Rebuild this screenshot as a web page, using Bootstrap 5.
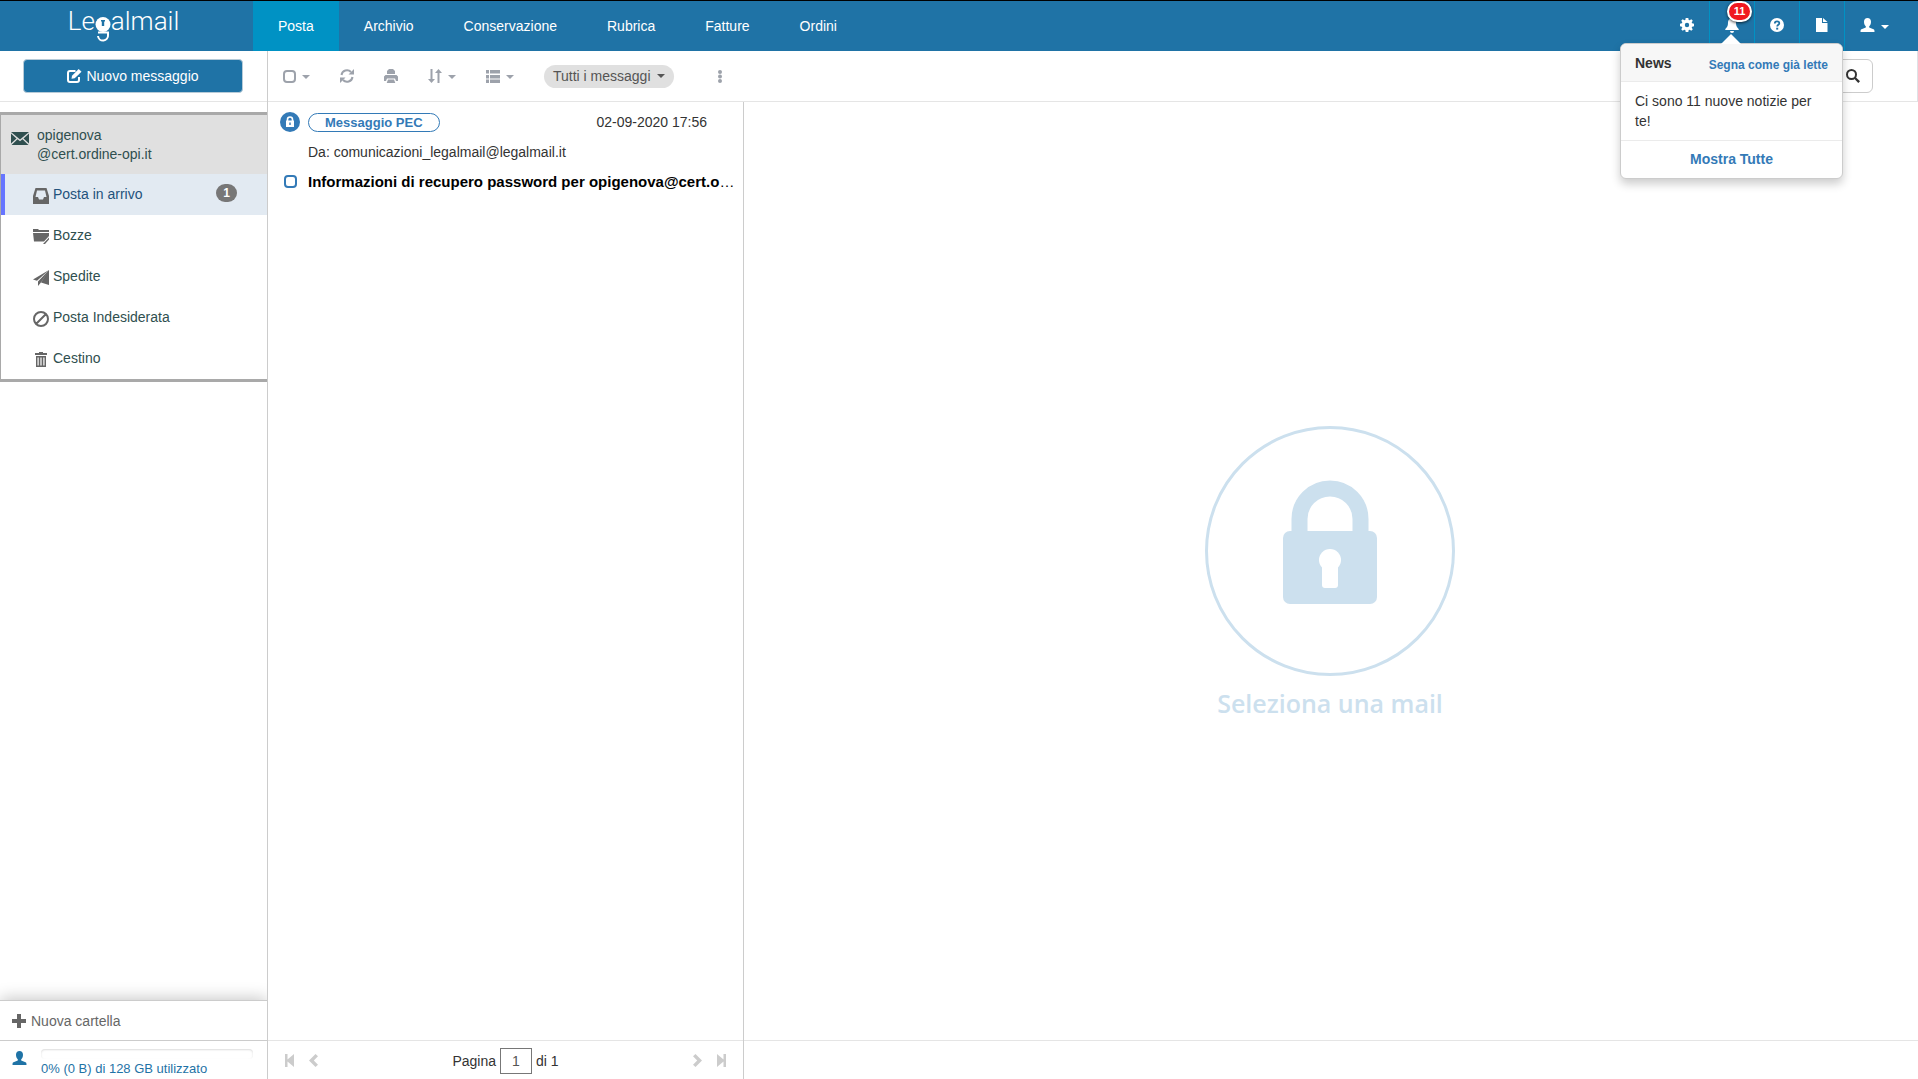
<!DOCTYPE html>
<html lang="it">
<head>
<meta charset="utf-8">
<meta name="viewport" content="width=device-width, initial-scale=1">
<title>Legalmail</title>
<link href="https://cdn.jsdelivr.net/npm/bootstrap@5.3.0/dist/css/bootstrap.min.css" rel="stylesheet">
<style>
body{font-family:"Liberation Sans",Arial,sans-serif;font-size:14px;line-height:20px;color:#333;background:#fff}
a{text-decoration:none}
svg{display:block;flex:none;fill:currentColor}
.topbar{background:#1f73a6;border-top:1px solid #000;height:51px}
.brand{width:253px;height:50px;padding-right:6px;color:#fff;font:300 26px/40px Roboto,"Liberation Sans",sans-serif}
.topbar .nav-link{color:#fff;padding:0 25px;line-height:50px;height:50px}
.topbar .nav-link.active{background:#0092c4}
.tool-link{width:45px;height:50px;color:#fff;border-left:1px solid #0092c4;padding-bottom:2px}
.tool-link.first{border-left-color:transparent}
.tool-link.user{width:74px;gap:6px;padding-left:15px}
.caret{width:0;height:0;border:4px solid transparent;border-top-color:currentColor;border-bottom:0}
.count-badge{position:absolute;top:0;right:2px;width:25px;height:21px;border:2px solid #fff;border-radius:11px;background:#f01820;font-size:11px;font-weight:700;line-height:17px;text-align:center;color:#fff;box-shadow:0 1px 3px rgba(0,0,0,.7)}
.bar{height:51px;border-bottom:1px solid #e5e5e5;flex:none}
.side{width:268px;border-right:1px solid #ccc}
.compose{height:34px;background:#1f73a6;color:#fff;border:1px solid #b7cbd8;border-radius:4px;gap:4px;margin:0 24px 0 23px;font-size:14px;line-height:20px}
.account{margin-top:10px;border:solid #a9a9a9;border-width:3px 0 3px 1px}
.account-head{background:#e0e0e0;color:#2f4f4f;line-height:19px;padding:11px 10px 10px;gap:8px}
.account-head svg{margin-top:6px}
.folder{height:41px;color:#2f4f4f;padding:0 30px 1px 32px;gap:4px}
.folder svg{color:#666;margin-top:3px}
.folder.current{background:#e2eaf2;color:#23527c;border-left:4px solid #6675ff;padding-left:28px}
.unread{background:#777;color:#fff;font-size:12px;font-weight:700;line-height:18px;width:21px;border-radius:9px;text-align:center;margin-bottom:2px}
.new-folder{height:40px;color:#666;border-top:1px solid #ccc;box-shadow:0 -2px 16px rgba(0,0,0,.22);clip-path:inset(-20px 0 0 0);padding:0 12px;gap:5px}
.quota{height:39px;border-top:1px solid #ccc;color:#1f73a6;padding:8px 14px 0 12px;gap:14px;font-size:13px;line-height:20px}
.quota svg{margin-top:2px}
.quota .progress{height:10px;background:#fff;border-radius:4px;box-shadow:inset 0 1px 2px rgba(0,0,0,.14)}
.box-check{appearance:none;width:13px;height:13px;border:2px solid #9da2ab;border-radius:4px;background:#fff;margin:0;display:block;flex:none}
.box-check.blue{border-color:#337ab7;margin-top:3px}
.icon-btn{background:none;border:0;padding:0;color:#9da2ab;gap:6px;display:flex;align-items:center;flex:none}
.icon-btn .caret{margin-top:2px}
.listbar{width:475px;padding:0 15px;gap:30px}
.filter{height:23px;background:#e0e0e0;color:#555;border:0;border-radius:12px;padding:0 9px;gap:6px;margin-right:14px}
.search{width:240px;margin-right:44px}
.search .form-control,.search .btn{height:34px;border-color:#ccc;font-size:14px}
.search .btn{width:38px;padding:0 10px;color:#333}
.list{width:476px;border-right:1px solid #ccc}
.msg{padding:10px 12px 0 12px;display:grid;grid-template-columns:20px minmax(0,1fr);gap:10px 8px}
.pec{border:1px solid #337ab7;border-radius:10px;color:#337ab7;font-size:13px;font-weight:700;line-height:17px;padding:0 16px}
.subject{color:#000;font-size:15px}
.pager{height:39px;border-top:1px solid #e5e5e5;padding:1px 17px 0;color:#333}
.pager .icon-btn{color:#ccc}
.pager-group{gap:14px}
.page-box{width:32px;height:26px;border:1px solid #777;text-align:center;padding:0;color:#555}
.empty{color:#cce0ee;font:600 25px/34px "Open Sans",sans-serif;border-bottom:1px solid #e5e5e5;margin-bottom:38px;gap:10px;padding:4px 2px 0 0}
.news{position:absolute;top:42px;right:-89px;width:223px;background:#fff;border:1px solid #ccc;border-radius:6px;box-shadow:0 5px 10px rgba(0,0,0,.2);z-index:5;color:#333}
.news::before{content:"";position:absolute;top:-10px;left:100px;border:10px solid transparent;border-top:0;border-bottom-color:#fff}
.news-head{background:#f7f7f7;border-bottom:1px solid #ebebeb;border-radius:5px 5px 0 0;height:38px;padding:0 14px}
.news-head a{font-size:12px;font-weight:700;color:#337ab7;padding-top:4px}
.news-body{padding:9px 14px;border-bottom:1px solid #ebebeb}
.news-foot{line-height:37px;color:#337ab7;font-weight:700}
</style>
</head>
<body class="vh-100 d-flex flex-column overflow-hidden">
<header class="topbar d-flex flex-shrink-0">
  <a class="brand d-flex justify-content-center" href="#" aria-label="Legalmail">
    <span>Le</span>
    <svg width="16" height="42" viewBox="0 0 16 42"><circle cx="8" cy="23.500" r="7.500"/><path d="M6 19h4v1.500H9.200V25H6.800v-4.500H6z" fill="#1f73a6"/><path d="M3 31.500h10V34a5 5 0 0 1-10 1" fill="none" stroke="#fff" stroke-width="2"/></svg>
    <span>almail</span>
  </a>
  <nav class="nav flex-grow-1">
    <a class="nav-link active" href="#">Posta</a><a class="nav-link" href="#">Archivio</a><a class="nav-link" href="#">Conservazione</a><a class="nav-link" href="#">Rubrica</a><a class="nav-link" href="#">Fatture</a><a class="nav-link" href="#">Ordini</a>
  </nav>
  <div class="d-flex">
    <a class="tool-link first d-flex align-items-center justify-content-center" href="#" aria-label="Impostazioni"><svg width="14" height="14" viewBox="0 0 14 14"><path fill-rule="evenodd" d="M5.700 0h2.600l.4 1.900 1 .4L11.300 1.200l1.500 1.500-1.100 1.600.4 1 1.900.4v2.600l-1.900.4-.4 1 1.100 1.600-1.500 1.500-1.600-1.100-1 .4-.4 1.900H5.700l-.4-1.900-1-.4-1.600 1.100-1.500-1.500 1.100-1.600-.4-1L0 8.300V5.700l1.900-.4.4-1-1.100-1.600 1.500-1.500 1.600 1.100 1-.4zM7 4.800a2.200 2.200 0 1 0 0 4.400 2.200 2.200 0 0 0 0-4.400z"/></svg></a>
    <div class="position-relative">
      <a class="tool-link d-flex align-items-center justify-content-center" href="#" aria-label="Notifiche"><svg width="14" height="16" viewBox="0 0 14 16"><path d="M7 0a1.300 1.300 0 0 1 1.300 1.400C10.500 2 11 4 11 6c0 3 1 4 2.700 6v1H.3v-1C2 10 3 9 3 6c0-2 .5-4 2.700-4.600A1.300 1.300 0 0 1 7 0zM5 14h4a2 2 0 0 1-4 0z"/></svg></a>
      <span class="count-badge">11</span>
      <section class="news">
        <div class="news-head d-flex align-items-center justify-content-between"><strong>News</strong><a href="#">Segna come già lette</a></div>
        <div class="news-body">Ci sono 11 nuove notizie per te!</div>
        <a class="news-foot d-block text-center" href="#">Mostra Tutte</a>
      </section>
    </div>
    <a class="tool-link d-flex align-items-center justify-content-center" href="#" aria-label="Aiuto"><svg width="14" height="14" viewBox="0 0 14 14"><circle cx="7" cy="7" r="7"/><path d="M4.800 5.500C4.800 2.500 9.300 2.700 9.300 5.200 9.300 6.800 7.200 6.800 7.200 8.600" fill="none" stroke="#1f73a6" stroke-width="1.800"/><path d="M6.200 9.700h2v1.900h-2z" fill="#1f73a6"/></svg></a>
    <a class="tool-link d-flex align-items-center justify-content-center" href="#" aria-label="Documenti"><svg width="12" height="14" viewBox="0 0 12 14"><path d="M0 0h6v5h5.500v9H0zM7 0l4.500 4H7z"/></svg></a>
    <a class="tool-link user d-flex align-items-center" href="#" aria-label="Profilo"><svg width="15" height="14" viewBox="0 0 15 14"><path d="M7.500 0C9.700 0 11 1.600 11 3.800c0 1.900-.7 3.600-1.800 4.500v1.200l4.300 1.800c.8.400 1 1 1 2.700H.5c0-1.700.2-2.300 1-2.700l4.300-1.800V8.300C4.700 7.400 4 5.700 4 3.800 4 1.600 5.300 0 7.500 0z"/></svg><span class="caret mt-1"></span></a>
  </div>
</header>
<main class="d-flex flex-grow-1" style="min-height:0">
  <aside class="side d-flex flex-column flex-shrink-0">
    <div class="bar d-flex align-items-center"><button class="compose flex-grow-1 d-flex align-items-center justify-content-center"><svg width="15" height="14" viewBox="0 0 15 14"><path d="M8.500 2H3a2 2 0 0 0-2 2v7a2 2 0 0 0 2 2h7a2 2 0 0 0 2-2V8" fill="none" stroke="#fff" stroke-width="2"/><path d="M4.500 9.800 5 6.800 11.700 0l2.800 2.800-6.800 6.500z"/></svg>Nuovo messaggio</button></div>
    <div class="account">
      <div class="account-head d-flex"><svg width="18" height="13" viewBox="0 0 18 13"><path d="M0 0h18L9 7.500zM0 1.500 5.500 6.500 0 11.500zM18 1.500v10L12.500 6.500zM6.500 7.300 9 9.300l2.500-2L17.500 13H.5z"/></svg><div>opigenova<br>@cert.ordine-opi.it</div></div>
      <nav>
        <a class="folder current d-flex align-items-center" href="#"><svg width="16" height="16" viewBox="0 0 16 16"><path fill-rule="evenodd" d="M2.500 0h11L16 8v8H0V8zM4 2.500 2.500 9H5l1 2.500h4L11 9h2.500L12 2.500z"/></svg><span class="flex-grow-1">Posta in arrivo</span><span class="unread">1</span></a>
        <a class="folder d-flex align-items-center" href="#"><svg width="16" height="15" viewBox="0 0 16 15"><path d="M0 0h5l1 1h10v2H0zM0 4h16v3l-5 5.500H1zM16 8.500v2L12 15h-2z"/></svg>Bozze</a>
        <a class="folder d-flex align-items-center" href="#"><svg width="16" height="16" viewBox="0 0 16 16"><path d="M16 0 0 9.500l4 1.300zM16 0 5 11.500V16l2.500-3zM16 0 8 12.500l8 2.500z"/></svg>Spedite</a>
        <a class="folder d-flex align-items-center" href="#"><svg width="16" height="16" viewBox="0 0 16 16"><path d="M3 13 13 3M15 8A7 7 0 1 1 1 8a7 7 0 0 1 14 0z" fill="none" stroke="currentColor" stroke-width="2"/></svg>Posta Indesiderata</a>
        <a class="folder d-flex align-items-center" href="#"><svg width="16" height="15" viewBox="0 0 16 15"><path fill-rule="evenodd" d="M6 0h4v1h4v2H2V1h4zM3 4h10v11H3zM4.500 5.500v8h1.200v-8zM7.400 5.500v8h1.200v-8zM10.300 5.500v8h1.200v-8z"/></svg>Cestino</a>
      </nav>
    </div>
    <a class="new-folder mt-auto d-flex align-items-center" href="#"><svg width="14" height="14" viewBox="0 0 14 14"><path d="M5 0h4v5h5v4H9v5H5V9H0V5h5z"/></svg>Nuova cartella</a>
    <div class="quota d-flex"><svg width="15" height="14" viewBox="0 0 15 14"><path d="M7.500 0C9.700 0 11 1.600 11 3.800c0 1.900-.7 3.600-1.800 4.500v1.200l4.300 1.800c.8.400 1 1 1 2.700H.5c0-1.700.2-2.300 1-2.700l4.300-1.800V8.300C4.700 7.400 4 5.700 4 3.800 4 1.600 5.300 0 7.500 0z"/></svg><div class="flex-grow-1"><div class="progress" role="progressbar" aria-label="Spazio utilizzato" aria-valuenow="0" aria-valuemin="0" aria-valuemax="100"></div>0% (0 B) di 128 GB utilizzato</div></div>
  </aside>
  <div class="d-flex flex-column flex-grow-1">
    <div class="bar d-flex align-items-center justify-content-between border-end">
      <div class="listbar d-flex align-items-center">
        <label class="icon-btn"><input class="box-check" type="checkbox" aria-label="Seleziona tutti"><span class="caret"></span></label>
        <button class="icon-btn" aria-label="Aggiorna"><svg width="14" height="14" viewBox="0 0 14 14"><path d="M1.500 6A5.500 5.500 0 0 1 11 3M12.500 8A5.500 5.500 0 0 1 3 11" fill="none" stroke="currentColor" stroke-width="2"/><path d="M14 0v5.500H8.500zM0 14V8.500h5.500z"/></svg></button>
        <button class="icon-btn" aria-label="Stampa"><svg width="14" height="14" viewBox="0 0 14 14"><path fill-rule="evenodd" d="M5 0h4l2 2v3H3V2zM1.500 6h11L14 7.500V12h-2l-1-2.500H3L2 12H0V7.500zM4 10.500h6l1.300 3.500H2.700z"/></svg></button>
        <button class="icon-btn" aria-label="Ordina"><svg width="14" height="14" viewBox="0 0 14 14"><path d="M2.500 0h2v10H7l-3.500 4L0 10h2.500zM9.500 14h2V4H14l-3.500-4L7 4h2.500z"/></svg><span class="caret"></span></button>
        <button class="icon-btn" aria-label="Vista"><svg width="14" height="13" viewBox="0 0 14 13"><path d="M0 0h3v3.500H0zM4 0h10v3.500H4zM0 5h3v3.500H0zM4 5h10v3.500H4zM0 9.500h3V13H0zM4 9.500h10V13H4z"/></svg><span class="caret"></span></button>
        <button class="filter d-flex align-items-center text-nowrap">Tutti i messaggi<span class="caret"></span></button>
        <button class="icon-btn" aria-label="Altro"><svg width="4" height="13" viewBox="0 0 4 13"><circle cx="2" cy="2" r="2"/><circle cx="2" cy="6.500" r="2"/><circle cx="2" cy="11" r="2"/></svg></button>
      </div>
      <div class="search input-group flex-nowrap"><input class="form-control" type="text" aria-label="Cerca"><button class="btn bg-white" aria-label="Avvia ricerca"><svg width="14" height="14" viewBox="0 0 14 14"><circle cx="5.500" cy="5.500" r="4.500" fill="none" stroke="currentColor" stroke-width="2"/><path d="m8 9.500 1.500-1.500L14 12.300 12.300 14z"/></svg></button></div>
    </div>
    <div class="d-flex flex-grow-1">
      <section class="list d-flex flex-column flex-shrink-0">
        <article class="msg">
          <svg width="20" height="20" viewBox="0 0 20 20"><circle cx="10" cy="10" r="10" fill="#337ab7"/><path d="M7.500 9V7.500a2.500 2.500 0 0 1 5 0V9" fill="none" stroke="#fff" stroke-width="1.600"/><path d="M6 8.500h8V15H6z" fill="#fff"/><path d="M9.300 10.500h1.400V13H9.300z" fill="#337ab7"/></svg>
          <div class="d-flex justify-content-between align-items-center pe-4"><span class="pec">Messaggio PEC</span><time>02-09-2020 17:56</time></div>
          <span></span><div>Da: comunicazioni_legalmail@legalmail.it</div>
          <input class="box-check blue mx-auto" type="checkbox" id="m1"><label class="subject text-nowrap" for="m1"><b>Informazioni di recupero password per opigenova@cert.o</b>…</label>
        </article>
        <div class="pager mt-auto d-flex align-items-center justify-content-between">
          <div class="d-flex pager-group"><button class="icon-btn" aria-label="Prima pagina"><svg width="10" height="13" viewBox="0 0 10 13"><path d="M0 0h2.500v5.500L9 0v13L2.500 7.500V13H0z"/></svg></button><button class="icon-btn" aria-label="Indietro"><svg width="9" height="13" viewBox="0 0 9 13"><path d="M6.500 0 9 2.300 4.800 6.500 9 10.700 6.500 13 0 6.500z"/></svg></button></div>
          <label class="d-flex align-items-center gap-1">Pagina <input class="page-box" type="text" value="1"> di 1</label>
          <div class="d-flex pager-group"><button class="icon-btn" aria-label="Avanti"><svg width="9" height="13" viewBox="0 0 9 13"><path d="M2.500 0 0 2.300 4.200 6.500 0 10.700 2.500 13 9 6.500z"/></svg></button><button class="icon-btn" aria-label="Ultima pagina"><svg width="10" height="13" viewBox="0 0 10 13"><path d="M10 0H7.500v5.500L1 0v13l6.500-5.500V13H10z"/></svg></button></div>
        </div>
      </section>
      <section class="empty flex-grow-1 d-flex flex-column align-items-center justify-content-center">
        <svg width="250" height="250" viewBox="0 0 250 250"><circle cx="125" cy="125" r="123.500" fill="none" stroke="currentColor" stroke-width="3"/><path d="M94.500 106V93a30 30 0 0 1 61 0v13" fill="none" stroke="currentColor" stroke-width="16"/><rect x="78" y="105" width="94" height="73" rx="7"/><circle cx="125" cy="134" r="11" fill="#fff"/><rect x="117" y="136" width="16" height="26" rx="3" fill="#fff"/></svg>
        <div>Seleziona una mail</div>
      </section>
    </div>
  </div>
</main>
<script src="https://cdn.jsdelivr.net/npm/bootstrap@5.3.0/dist/js/bootstrap.bundle.min.js"></script>
</body>
</html>
